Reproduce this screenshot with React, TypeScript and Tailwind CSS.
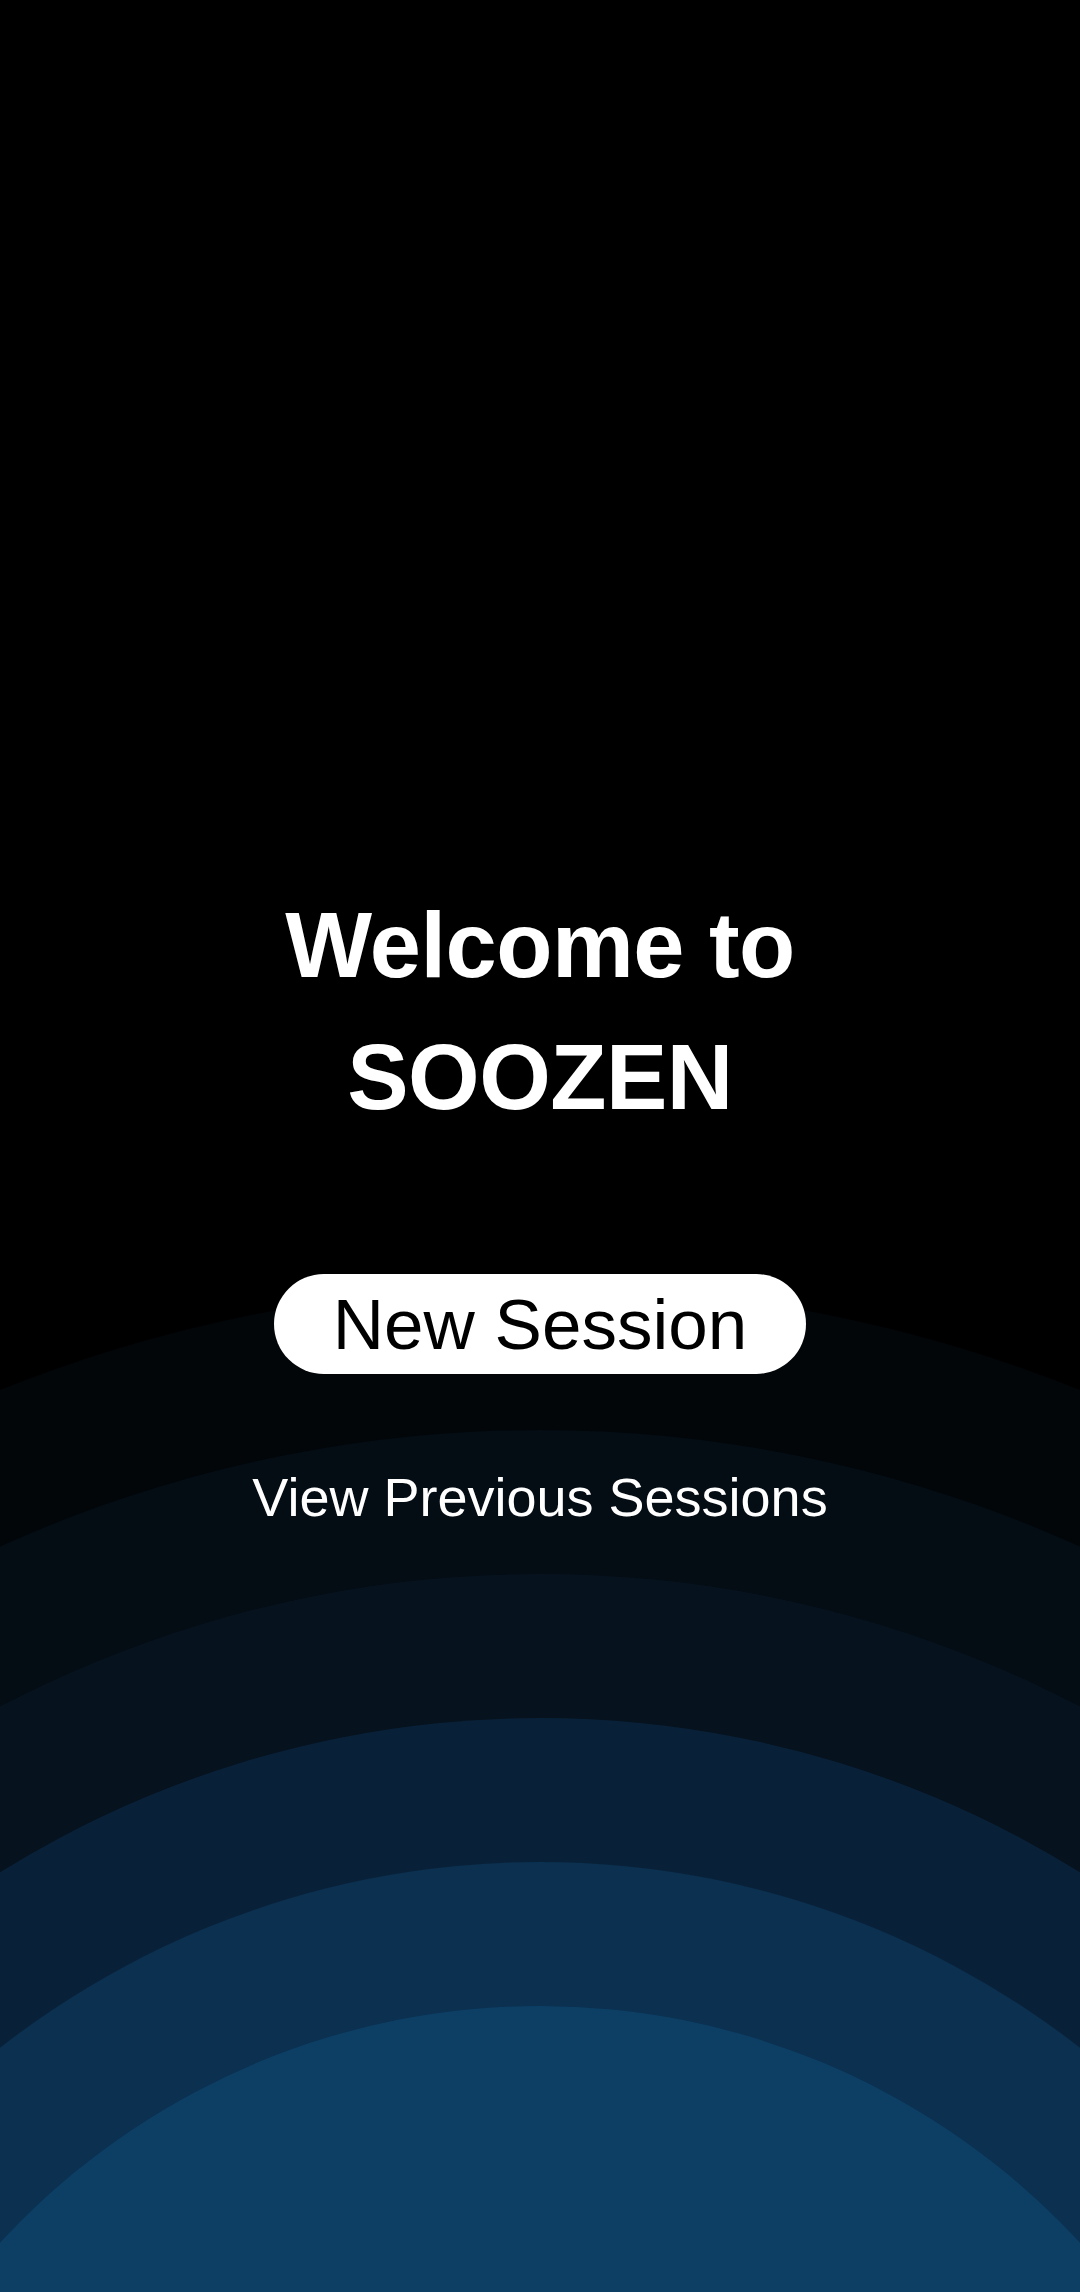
import React from "react";

const rings = [
  { r: 1454, fill: "#020609" },
  { r: 1310, fill: "#040c14" },
  { r: 1166, fill: "#06131f" },
  { r: 1022, fill: "#092138" },
  { r: 878, fill: "#0b3050" },
  { r: 734, fill: "#0d3f65" },
];

export default function App() {
  return (
    <div
      className="relative w-full h-[2292px] bg-black overflow-hidden"
      style={{ fontFamily: '"Liberation Sans", Arial, sans-serif' }}
    >
      <svg
        className="absolute inset-0 w-full h-full"
        viewBox="0 0 1080 2292"
        preserveAspectRatio="none"
        aria-hidden="true"
      >
        {rings.map((ring) => (
          <circle key={ring.r} cx={540} cy={2740} r={ring.r} fill={ring.fill} />
        ))}
      </svg>

      <div className="relative z-10 flex flex-col items-center pt-[879px]">
        <h1 className="text-white font-bold text-[92px] leading-[132px] text-center tracking-[-0.5px]">
          Welcome to
          <br />
          SOOZEN
        </h1>

        <button className="mt-[131px] w-[532px] h-[100px] rounded-full bg-white text-black text-[71px] leading-none flex items-center justify-center">
          New Session
        </button>

        <button className="mt-[96px] text-white text-[54px] leading-[54px]">
          View Previous Sessions
        </button>
      </div>
    </div>
  );
}
